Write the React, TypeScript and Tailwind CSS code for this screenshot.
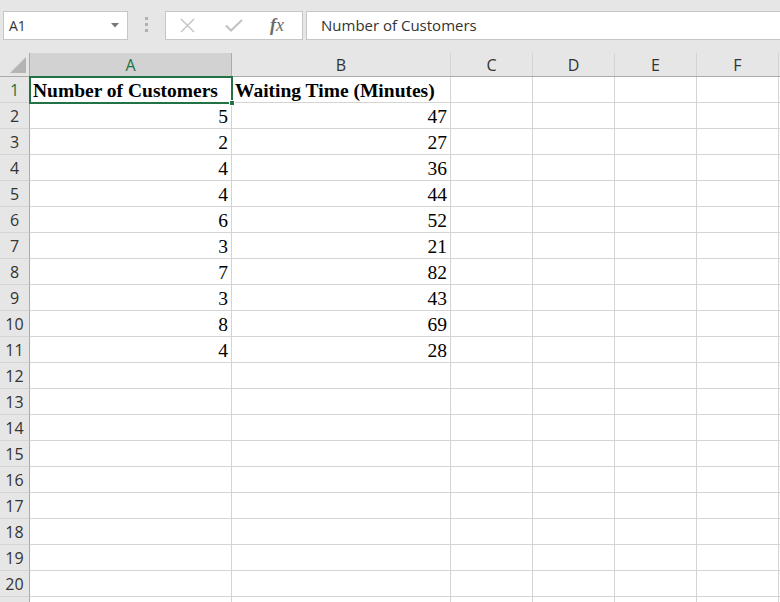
import React from 'react';

const cols = ['A', 'B', 'C', 'D', 'E', 'F'];
const colW = ['w-[202px]', 'w-[219px]', 'w-[82px]', 'w-[82px]', 'w-[82px]', 'w-[82px]'];

const data: [string, string][] = [
  ['5', '47'],
  ['2', '27'],
  ['4', '36'],
  ['4', '44'],
  ['6', '52'],
  ['3', '21'],
  ['7', '82'],
  ['3', '43'],
  ['8', '69'],
  ['4', '28'],
];

const ui = { fontFamily: '"Segoe UI", "Open Sans", "Noto Sans", sans-serif' };
const serif = { fontFamily: '"Liberation Serif", "Times New Roman", serif' };

function FormulaBar() {
  return (
    <div className="flex h-[53px] items-start bg-[#e6e6e6] pt-[11px]">
      {/* Name box */}
      <div className="ml-[3px] flex h-[29px] w-[125px] items-center justify-between border border-[#c6c6c6] bg-white pl-[5px] pr-[8px]">
        <span className="text-[14px] text-[#333]" style={ui}>A1</span>
        <svg width="8" height="5" viewBox="0 0 8 5">
          <path d="M0 0h8L4 4.5z" fill="#777" />
        </svg>
      </div>

      {/* grip dots */}
      <div className="ml-[17px] mt-[6px] flex w-[4px] flex-col gap-[3px]">
        <div className="h-[3px] w-[3px] bg-[#b0b0b0]" />
        <div className="h-[3px] w-[3px] bg-[#b0b0b0]" />
        <div className="h-[3px] w-[3px] bg-[#b0b0b0]" />
      </div>

      {/* cancel / enter / fx */}
      <div className="ml-[16px] flex h-[29px] w-[138px] items-center border border-[#c6c6c6] bg-white">
        <svg className="ml-[14px]" width="15" height="15" viewBox="0 0 15 15">
          <path d="M1 1l13 13M14 1L1 14" stroke="#c2c2c2" strokeWidth="1.4" />
        </svg>
        <svg className="ml-[30px]" width="18" height="13" viewBox="0 0 18 13">
          <path d="M1 6.5l5 5L17 1" stroke="#c2c2c2" strokeWidth="2" fill="none" />
        </svg>
        <span className="ml-[27px] text-[18px] italic text-[#6b6b6b]" style={serif}>
          <span className="font-bold">f</span>x
        </span>
      </div>

      {/* formula input */}
      <div className="ml-[3px] flex h-[29px] flex-1 items-center border border-r-0 border-[#c6c6c6] bg-white pl-[14px]">
        <span className="text-[15px] text-[#333]" style={ui}>Number of Customers</span>
      </div>
    </div>
  );
}

function ColumnHeader() {
  return (
    <div className="flex h-[24px] border-b border-[#ababab] bg-[#e6e6e6]">
      <div className="flex w-[30px] items-end justify-end border-r border-[#ababab] pb-[3px] pr-[3px]">
        <svg width="16" height="16" viewBox="0 0 16 16">
          <path d="M16 0V16H0z" fill="#b4b4b4" />
        </svg>
      </div>
      {cols.map((c, i) => (
        <div
          key={c}
          className={`${colW[i]} flex items-center justify-center border-r ${
            i === 0 ? 'border-[#ababab] bg-[#d2d2d2] text-[#217346]' : 'border-[#d4d4d4] text-[#333]'
          } text-[16px]`}
          style={ui}
        >
          {c}
        </div>
      ))}
      <div className="flex-1" />
    </div>
  );
}

function Row({ n, a, b, bold, label = true }: { n: number; a?: string; b?: string; bold?: boolean; label?: boolean }) {
  return (
    <div className="flex h-[26px] shrink-0">
      <div
        className={`flex w-[30px] items-center justify-center border-r border-b border-r-[#ababab] border-b-[#d4d4d4] bg-[#e6e6e6] pt-[1px] text-[16px] ${
          n === 1 ? 'text-[#217346]' : 'text-[#333]'
        }`}
        style={ui}
      >
        {label ? n : null}
      </div>
      {cols.map((c, i) => {
        const val = i === 0 ? a : i === 1 ? b : undefined;
        return (
          <div
            key={c}
            className={`${colW[i]} flex items-center overflow-visible whitespace-nowrap border-r border-b border-[#d4d4d4] pt-[2px] text-[19.5px] text-black ${
              bold ? 'justify-start pl-[3px] font-bold' : 'justify-end pr-[3px]'
            }`}
            style={serif}
          >
            {val}
          </div>
        );
      })}
      <div className="flex-1 border-b border-[#d4d4d4]" />
    </div>
  );
}

export default function App() {
  return (
    <div className="h-[602px] w-[780px] overflow-hidden bg-white">
      <FormulaBar />
      <ColumnHeader />
      <div className="relative">
        <Row n={1} a="Number of Customers" b="Waiting Time (Minutes)" bold />
        {data.map((d, i) => (
          <Row key={i} n={i + 2} a={d[0]} b={d[1]} />
        ))}
        {Array.from({ length: 9 }, (_, i) => (
          <Row key={`e${i}`} n={i + 12} />
        ))}
        {/* row 21 only peeks in at the bottom edge */}
        <Row n={21} label={false} />
        {/* selection A1 */}
        <div className="pointer-events-none absolute left-[29px] top-[-1px] h-[28px] w-[204px] border-2 border-[#217346]" />
        <div className="pointer-events-none absolute left-[229px] top-[23px] h-[6px] w-[6px] border border-white bg-[#217346]" />
      </div>
    </div>
  );
}
